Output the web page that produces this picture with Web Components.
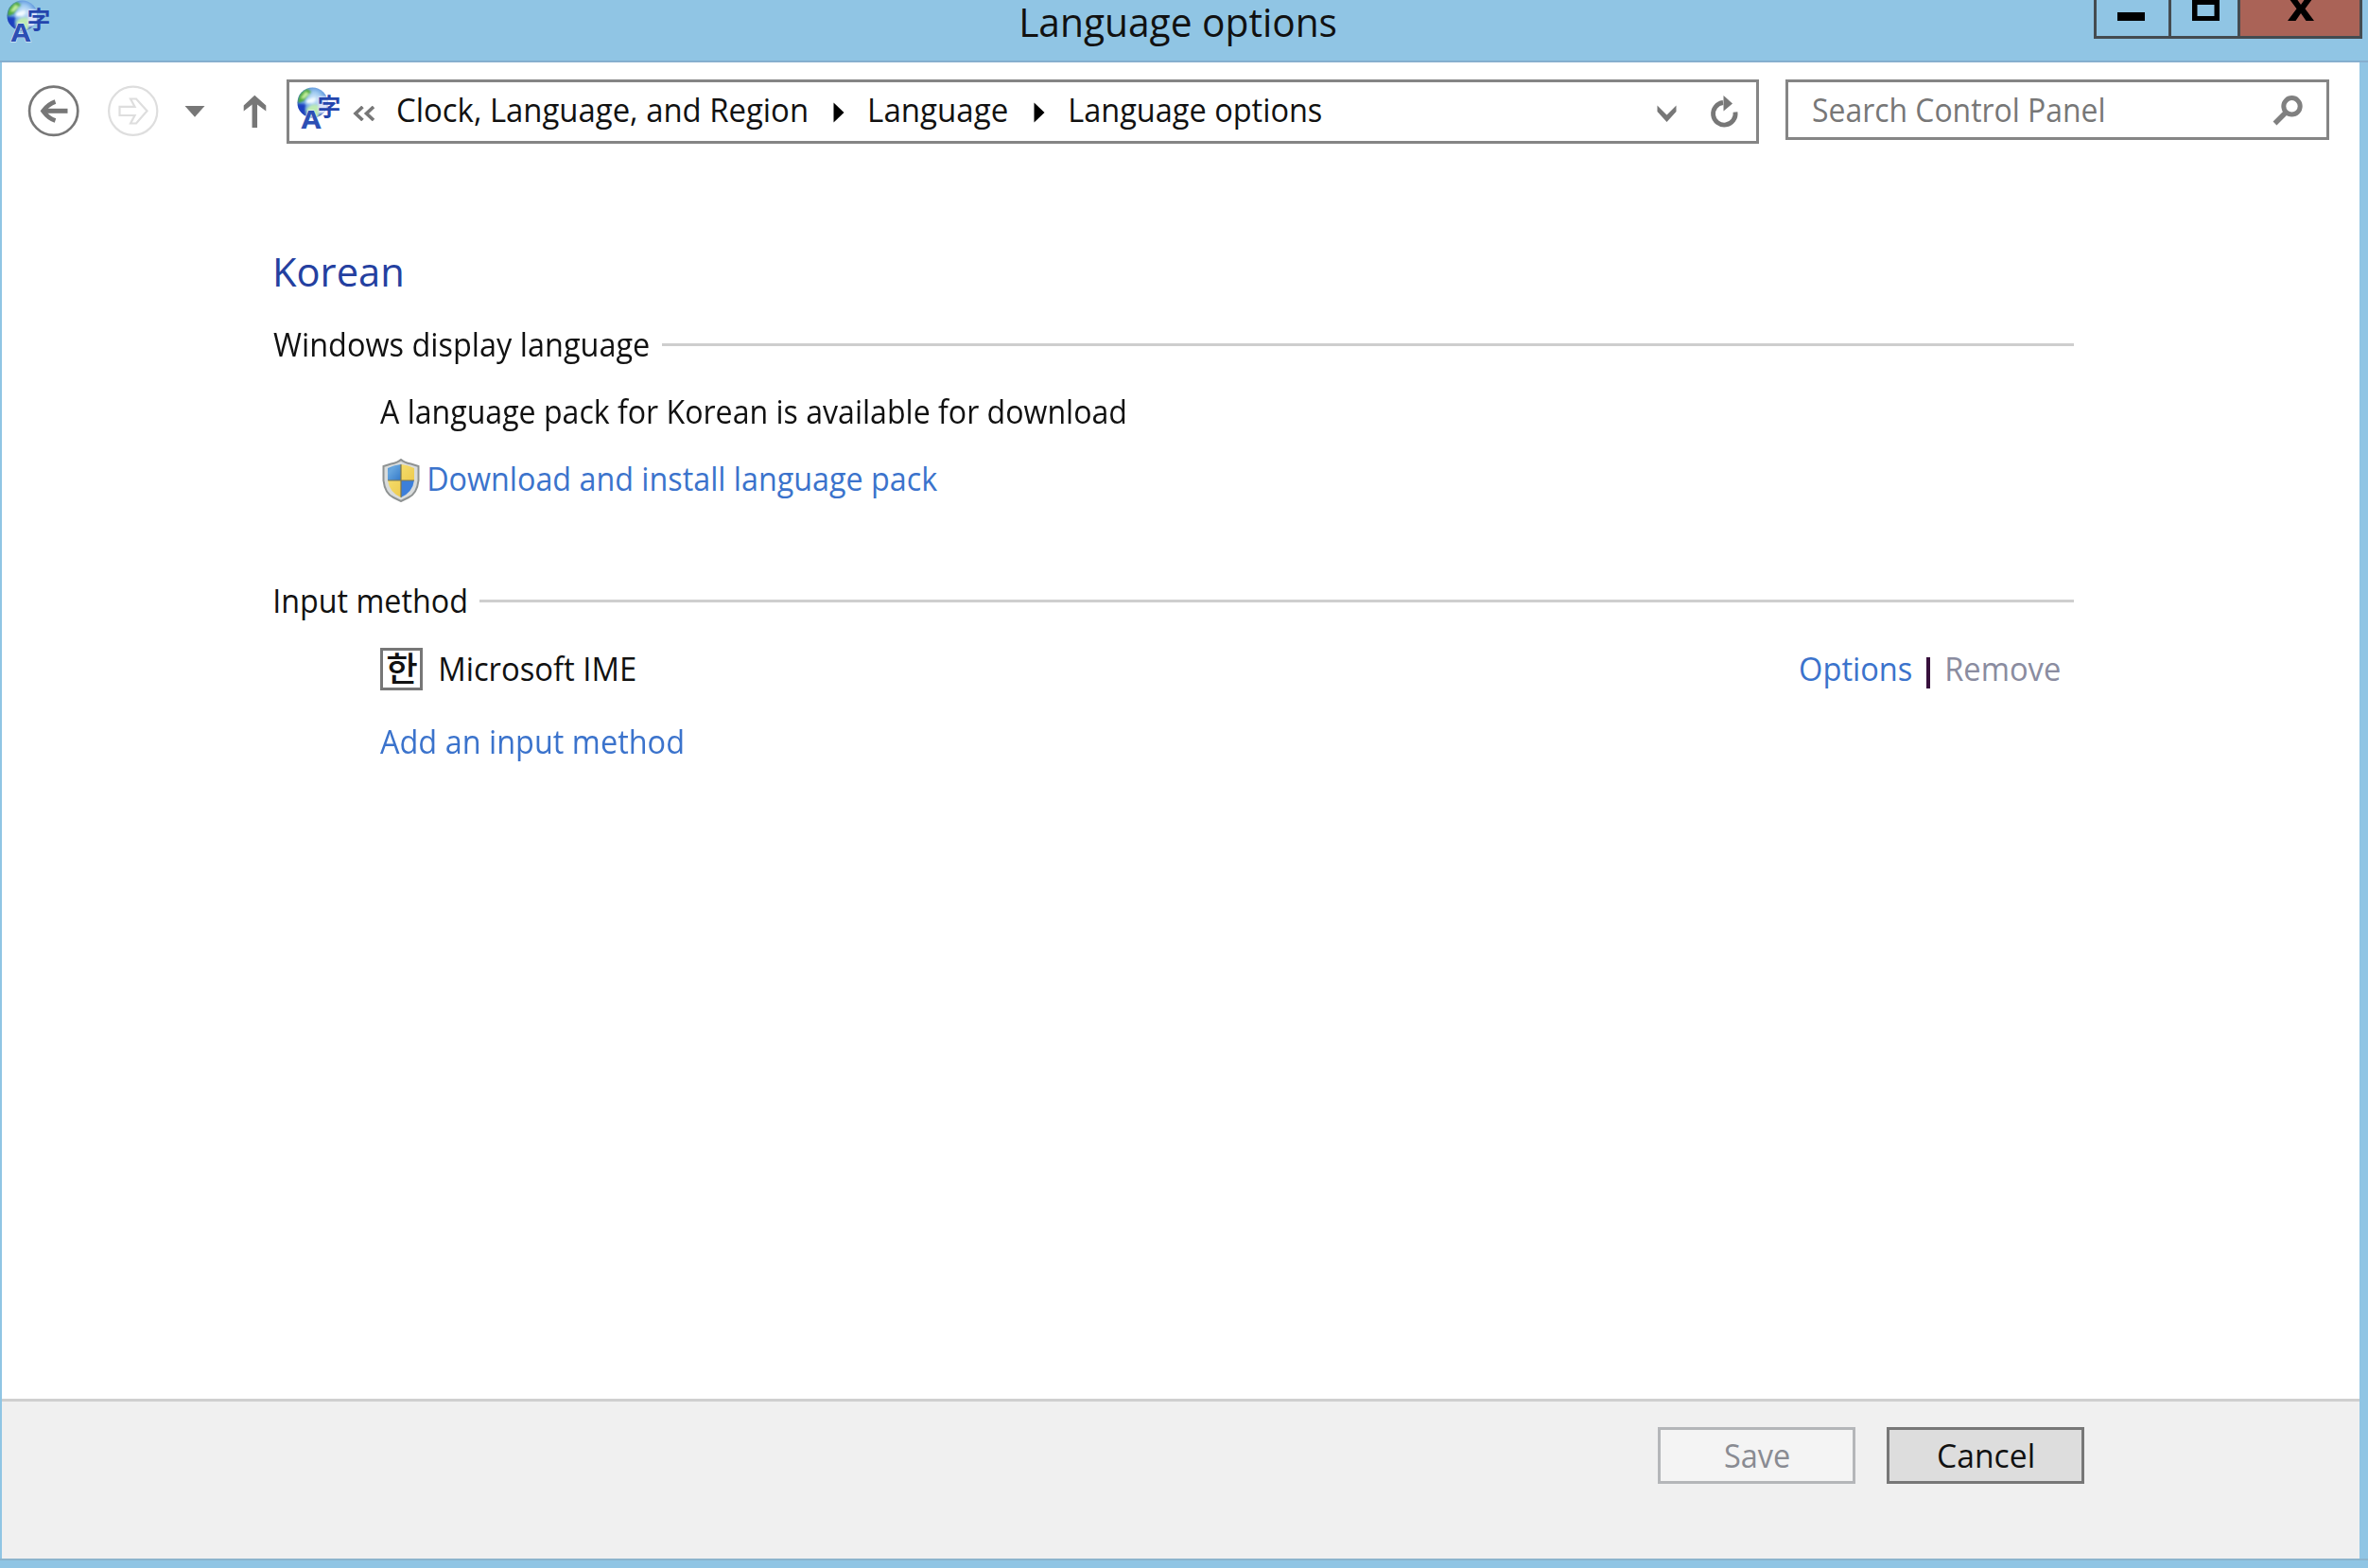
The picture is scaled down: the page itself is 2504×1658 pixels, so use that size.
<!DOCTYPE html>
<html lang="en">
<head>
<meta charset="utf-8">
<title>Language options</title>
<style>
html, body { margin: 0; height: 100%; overflow: hidden; }
body { font-family: "Open Sans", "Noto Sans CJK KR", sans-serif; color: #111; background: #90c5e4; }
</style>
</head>
<body>
<language-window></language-window>
<script>
const define = (name, html, extra) => {
  const tpl = document.createElement('template');
  tpl.innerHTML = html;
  customElements.define(name, class extends HTMLElement {
    constructor() {
      super();
      this.attachShadow({ mode: 'open' }).appendChild(tpl.content.cloneNode(true));
    }
    connectedCallback() { if (extra) extra(this); }
  });
};

// One line of text whose inked extent is scaled to the width given by `w`.
const ctx = document.createElement('canvas').getContext('2d');
define('fit-text', `
<style>
:host { display: block; flex: none; height: var(--line, 48px); }
span { display: block; width: max-content; white-space: pre; line-height: var(--line, 48px); transform-origin: 0 50%; }
</style><span></span>`, el => {
  const size = +(el.getAttribute('size') || 34.5), w = +el.getAttribute('w'), text = el.getAttribute('text');
  const span = el.shadowRoot.querySelector('span');
  span.textContent = text;
  span.style.fontSize = size + 'px';
  ctx.font = size + 'px "Open Sans"';
  const m = ctx.measureText(text);
  const k = w / (m.actualBoundingBoxLeft + m.actualBoundingBoxRight);
  span.style.transform = `scaleX(${k}) translateX(${m.actualBoundingBoxLeft}px)`;
  el.style.width = w + 'px';
});

define('language-icon', `
<style>:host { display: block; flex: none; width: 48px; height: 48px; } svg { display: block; overflow: visible; }</style>
<svg width="48" height="48" viewBox="0 0 48 48">
  <defs>
    <radialGradient id="g" cx=".55" cy=".38" r=".65">
      <stop offset="0" stop-color="#d9edfb"/><stop offset=".35" stop-color="#9cc8f0"/>
      <stop offset=".72" stop-color="#4a86d6"/><stop offset="1" stop-color="#2238a8"/>
    </radialGradient>
    <filter id="b"><feGaussianBlur stdDeviation=".9"/></filter>
    <clipPath id="c"><circle cx="17.500" cy="16.500" r="16"/></clipPath>
  </defs>
  <circle cx="17.500" cy="16.500" r="16" fill="url(#g)"/>
  <g clip-path="url(#c)" filter="url(#b)">
    <path d="M2 15Q3 5 12 2L16 5L12 10L9 14L3 17Z" fill="#4fae35"/>
    <path d="M5 12L10 5L14 7L9 12Z" fill="#c2ef9d"/>
    <path d="M11 14Q17 10 21 13L18 17L11 17Z" fill="#f1faff"/>
    <path d="M1 18L10 18L9 30Q2 26 1 18Z" fill="#1b3fc0"/>
    <path d="M11 23Q18 16 25 20L24 32L12 31Z" fill="#bdebb4"/>
    <path d="M23 10L34 10L34 28L24 28Z" fill="#d9e2fa"/>
  </g>
  <text x="22.800" y="29.800" font-family="'Noto Sans CJK JP', sans-serif" font-weight="700" font-size="24.500" fill="#2445ad">字</text>
  <text x="5.600" y="44.300" font-family="'Open Sans', sans-serif" font-weight="700" font-size="27" fill="#2c4fb4" stroke="#e6f2fc" stroke-width="1" paint-order="stroke" textLength="21" lengthAdjust="spacingAndGlyphs">A</text>
</svg>`);

define('caption-buttons', `
<style>
:host { display: flex; height: 41px; width: 284px; box-sizing: border-box; border: 3px solid #444b50; border-top: 0; }
div { border-right: 3px solid #444b50; box-sizing: border-box; }
.min { width: 79px; } .max { width: 73px; } .close { flex: 1; background: #aa6357; border: 0; }
svg { display: block; }
</style>
<div class="min"><svg width="76" height="38"><path d="M22 13h29v9h-29z"/></svg></div>
<div class="max"><svg width="70" height="38"><path fill-rule="evenodd" d="M22 0h29v22h-29zM27.500 5v12h18v-12z"/></svg></div>
<div class="close"><svg width="126" height="38"><path d="M50 -3.500h8l6 8.500l6-8.500h8l-9.500 12.700l9.500 12.800h-8.500l-5.500-8l-5.500 8h-8.500l9.500-12.800z"/></svg></div>`);

define('title-bar', `
<style>
:host { display: flex; height: 66px; box-sizing: border-box; background: #90c5e4; border-bottom: 2px solid #86afcf; padding: 0 6px 0 6px; align-items: flex-start; }
.title { margin-left: 1027px; --line: 46px; } caption-buttons { margin-left: auto; }
</style>
<language-icon></language-icon>
<fit-text class="title" size="42" w="332" text="Language options"></fit-text>
<caption-buttons></caption-buttons>`);

define('nav-buttons', `
<style>:host { display: block; width: 301px; height: 68px; flex: none; } svg { display: block; }</style>
<svg width="301" height="68" viewBox="2 84 301 68" fill="none">
  <circle cx="56.700" cy="117.300" r="25.600" stroke="#777" stroke-width="2.700"/>
  <path d="M45 117.300H71.500" stroke="#777" stroke-width="5"/>
  <path d="M58.500 107.500Q51 110 45.500 117.300Q51 125 58.500 127.500" stroke="#777" stroke-width="4.600"/>
  <circle cx="140.700" cy="117.300" r="25.600" stroke="#dedede" stroke-width="2.200"/>
  <path d="M126.500 112.800H142.500L138 104.500H144L155.500 117.300L144 130.500H138L142.500 122H126.500Z" stroke="#dedede" stroke-width="2.200"/>
  <path d="M195.500 112H216.500L206 123.800Z" fill="#777"/>
  <path d="M269.300 135V105" stroke="#777" stroke-width="5.500"/>
  <path d="M269.300 100.800L281.300 111.500V117.500L269.300 108.500L257.700 117.500V111.500Z" fill="#777"/>
</svg>`);

define('crumb-arrow', `
<style>:host { display: block; flex: none; width: 12px; height: 22px; } svg { display: block; }</style>
<svg width="12" height="22"><path d="M0.500 0.500L11.500 11L0.500 21.500Z" fill="#000"/></svg>`);

define('address-bar', `
<style>
:host { display: flex; box-sizing: border-box; width: 1557px; height: 68px; border: 3px solid #858585; padding-left: 7px; flex: none; }
language-icon { margin-top: 5px; }
.chev { margin: 25px 24px 0 12px; }
fit-text { margin-top: 5px; }
crumb-arrow { margin: 21px 27px 0 28px; }
svg { display: block; flex: none; }
.tools { margin-left: auto; }
</style>
<language-icon></language-icon>
<svg class="chev" width="24" height="16" fill="none" stroke="#777" stroke-width="3.600"><path d="M10.500 1L3 8L10.500 15M22 1L14.500 8L22 15"/></svg>
<fit-text w="432" text="Clock, Language, and Region"></fit-text>
<crumb-arrow></crumb-arrow>
<fit-text w="145" text="Language"></fit-text>
<crumb-arrow></crumb-arrow>
<fit-text w="265" text="Language options"></fit-text>
<svg class="tools" width="110" height="62" viewBox="1747 87 110 62" fill="none" stroke="#777">
  <path d="M1752.500 111.500L1762.500 121.500L1772.500 111.500V118L1762.500 129L1752.500 118Z" fill="#777" stroke="none"/>
  <path d="M1822 108.500A11.800 11.800 0 1 0 1835 118.500" stroke-width="4.800"/>
  <path d="M1822.500 101L1832 109.500L1822.500 117.500Z" fill="#777" stroke="none"/>
</svg>`);

define('search-box', `
<style>
:host { display: flex; box-sizing: border-box; width: 575px; height: 64px; border: 3px solid #858585; padding-left: 26px; color: #777; flex: none; }
fit-text { margin-top: 5px; } svg { display: block; margin-left: auto; margin-right: 24px; }
</style>
<fit-text w="307" text="Search Control Panel"></fit-text>
<svg width="34" height="58" viewBox="2402 87 34 58" fill="none" stroke="#808080">
  <circle cx="2423.500" cy="112.300" r="8.700" stroke-width="5"/><path d="M2417.500 118.500L2405.500 130.500" stroke-width="5.400"/>
</svg>`);

define('section-heading', `
<style>
:host { display: flex; align-items: center; }
i { flex: 1; height: 3px; background: #cecece; margin-left: 14px; }
</style><slot></slot><i></i>`);

define('shield-icon', `
<style>:host { display: block; flex: none; width: 40px; height: 46px; } svg { display: block; }</style>
<svg width="40" height="46" viewBox="0 0 40 46">
  <defs>
    <linearGradient id="y" x2="1" y2="1"><stop stop-color="#f5df70"/><stop offset="1" stop-color="#edc84a"/></linearGradient>
    <linearGradient id="u" x2="1" y2="1"><stop stop-color="#3f83cb"/><stop offset=".5" stop-color="#66a5de"/><stop offset="1" stop-color="#3379c9"/></linearGradient>
    <clipPath id="s"><path d="M20 6Q13 6.500 6 10V22Q7 35 20 41Q33 35 34 22V10Q27 6.500 20 6Z"/></clipPath>
  </defs>
  <path d="M20 1Q17 4 9.500 5.500L1.500 8V23Q3 37 12 41L20 45L28 41Q37 37 38.500 23V8L30.500 5.500Q23 4 20 1Z" fill="#d9dcdc" stroke="#8e9292" stroke-width="2"/>
  <g clip-path="url(#s)">
    <path d="M0 0h20v23H0z" fill="url(#u)"/><path d="M20 0h20v23H20z" fill="url(#y)"/>
    <path d="M0 23h20v23H0z" fill="url(#y)"/><path d="M20 23h20v23H20z" fill="#3c7fdb"/>
    <path d="M20 5V42M5 23H35" stroke="#80764a" stroke-width="1.200"/>
  </g>
</svg>`);

define('ime-icon', `
<style>
:host { display: block; flex: none; width: 45px; height: 45px; box-sizing: border-box; border: 3px solid #777; background: #fff; }
svg { display: block; overflow: visible; }
</style>
<svg width="39" height="39"><text x="20" y="33" text-anchor="middle" font-family="'Noto Sans CJK KR', sans-serif" font-weight="500" font-size="36.500" fill="#111">한</text></svg>`);

define('language-panel', `
<style>
:host { display: block; flex: 1; box-sizing: border-box; padding: 111px 302px 0 287px; }
section-heading { height: 48px; }
.name { color: #2440a0; margin: 0 0 29px 3px; }
.row { display: flex; align-items: center; height: 48px; margin-left: 113px; }
.link { color: #3b73cc; }
.acts { display: flex; margin-left: auto; margin-right: 15px; }
.acts i { width: 4px; height: 33px; background: #37103c; margin: 12px 18px 0 16px; }
.off { color: #8a8ca0; }
</style>
<fit-text class="name" size="42" w="133" text="Korean"></fit-text>
<section-heading style="margin-bottom:23px"><fit-text w="397" text="Windows display language"></fit-text></section-heading>
<div class="row" style="margin-bottom:23px"><fit-text w="788" text="A language pack for Korean is available for download"></fit-text></div>
<div class="row link" style="margin-bottom:81px;padding-left:2px"><shield-icon style="margin-top:4px"></shield-icon><fit-text style="margin:0 0 0 10px" w="537" text="Download and install language pack"></fit-text></div>
<section-heading style="margin-bottom:24px;padding-left:2px"><fit-text w="202" text="Input method"></fit-text></section-heading>
<div class="row" style="margin-bottom:29px"><ime-icon></ime-icon><fit-text style="margin-left:19px" w="206" text="Microsoft IME"></fit-text>
  <div class="acts"><fit-text class="link" w="117" text="Options"></fit-text><i></i><fit-text class="off" w="119" text="Remove"></fit-text></div></div>
<div class="row link"><fit-text w="320" text="Add an input method"></fit-text></div>`);

define('push-button', `
<style>
:host { display: flex; justify-content: center; box-sizing: border-box; width: 209px; height: 60px; border: 3px solid #777; background: #ddd; padding-top: 3px; flex: none; }
:host([disabled]) { border-color: #b4b6b9; background: #f4f4f4; color: #898b92; }
</style><slot></slot>`);

define('button-bar', `
<style>
:host { display: flex; justify-content: flex-end; gap: 33px; height: 169px; box-sizing: border-box; border-top: 3px solid #cfcfcf; background: #f0f0f0; padding: 27px 291px 0 0; }
</style>
<push-button disabled><fit-text w="68" text="Save"></fit-text></push-button>
<push-button><fit-text w="99.500" text="Cancel"></fit-text></push-button>`);

define('language-window', `
<style>
:host { display: flex; flex-direction: column; width: 2504px; height: 1658px; background: #90c5e4; }
main { display: flex; flex-direction: column; flex: 1; margin: 0 9px 0 2px; background: #fff; }
nav { display: flex; padding-top: 18px; height: 68px; }
search-box { margin-left: 28px; }
.edge { height: 10px; box-sizing: border-box; border-top: 2px solid #8cb4cd; }
</style>
<title-bar></title-bar>
<main>
  <nav><nav-buttons></nav-buttons><address-bar></address-bar><search-box></search-box></nav>
  <language-panel></language-panel>
  <button-bar></button-bar>
</main>
<div class="edge"></div>`);
</script>
</body>
</html>
